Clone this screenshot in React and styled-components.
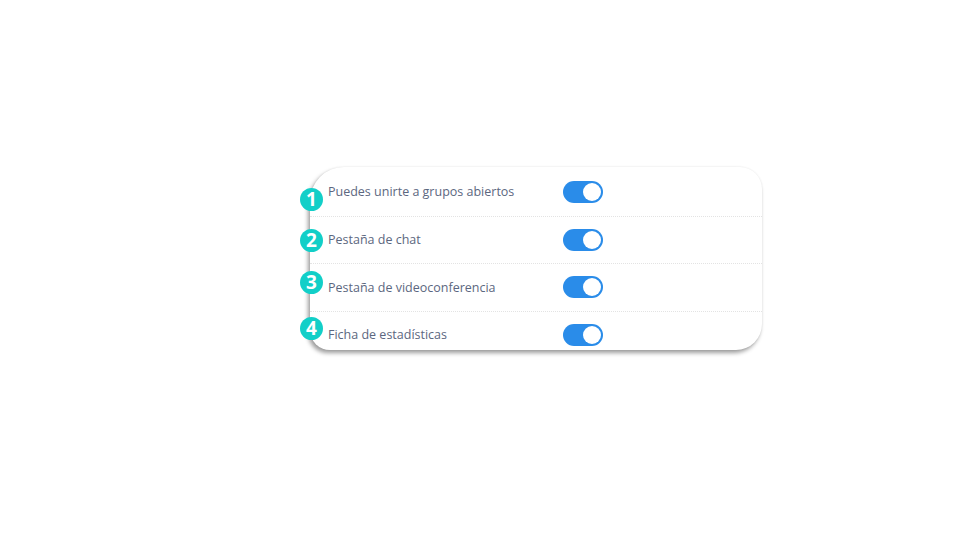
import React from "react";
import styled, { createGlobalStyle } from "styled-components";

const Global = createGlobalStyle`
  html, body { margin: 0; padding: 0; background: #ffffff; }
  body { font-family: "Open Sans", "Noto Sans", sans-serif; }
`;

const Page = styled.div`
  width: 960px;
  height: 540px;
  padding: 167px 0 0 310px;
  box-sizing: border-box;
`;

const Frame = styled.div`
  position: relative;
  width: 452px;
`;

const Card = styled.div`
  width: 452px;
  height: 183px;
  background: #fff;
  border-radius: 34px 22px 26px 20px;
  box-shadow: -2px 3px 4px rgba(0, 0, 0, 0.38), 0 0 2px rgba(0, 0, 0, 0.08);
  overflow: hidden;
  display: flex;
  flex-direction: column;
  padding-top: 1px;
  box-sizing: border-box;
`;

const Row = styled.div`
  flex: 0 0 auto;
  height: 47.5px;
  display: flex;
  align-items: center;
  padding-left: 18px;
  box-sizing: border-box;
  border-top: ${(p) => (p.$first ? "none" : "1px dotted #e3e3e3")};
`;

const Label = styled.span`
  width: 235px;
  font-size: 12.5px;
  color: #5c6780;
`;

const Toggle = styled.span`
  width: 40px;
  height: 22px;
  border-radius: 11px;
  background: #2a8ce9;
  display: inline-flex;
  align-items: center;
  justify-content: flex-end;
  padding-right: 2px;
  box-sizing: border-box;
`;

const Knob = styled.span`
  width: 18px;
  height: 18px;
  border-radius: 50%;
  background: #fff;
`;

const Badge = styled.span`
  position: absolute;
  left: -10px;
  top: ${(p) => p.$top}px;
  width: 23px;
  height: 23px;
  border-radius: 50%;
  background: #12cfc8;
  color: #fff;
  font-family: "Open Sans", sans-serif;
  font-weight: 700;
  font-size: 19px;
  line-height: 22px;
  text-align: center;
`;

const rows = [
  { label: "Puedes unirte a grupos abiertos", badge: 21 },
  { label: "Pestaña de chat", badge: 62 },
  { label: "Pestaña de videoconferencia", badge: 104 },
  { label: "Ficha de estadísticas", badge: 150 },
];

export default function App() {
  return (
    <Page>
      <Global />
      <Frame>
        <Card>
          {rows.map((r, i) => (
            <Row key={r.label} $first={i === 0}>
              <Label>{r.label}</Label>
              <Toggle>
                <Knob />
              </Toggle>
            </Row>
          ))}
        </Card>
        {rows.map((r, i) => (
          <Badge key={i} $top={r.badge}>
            {i + 1}
          </Badge>
        ))}
      </Frame>
    </Page>
  );
}
